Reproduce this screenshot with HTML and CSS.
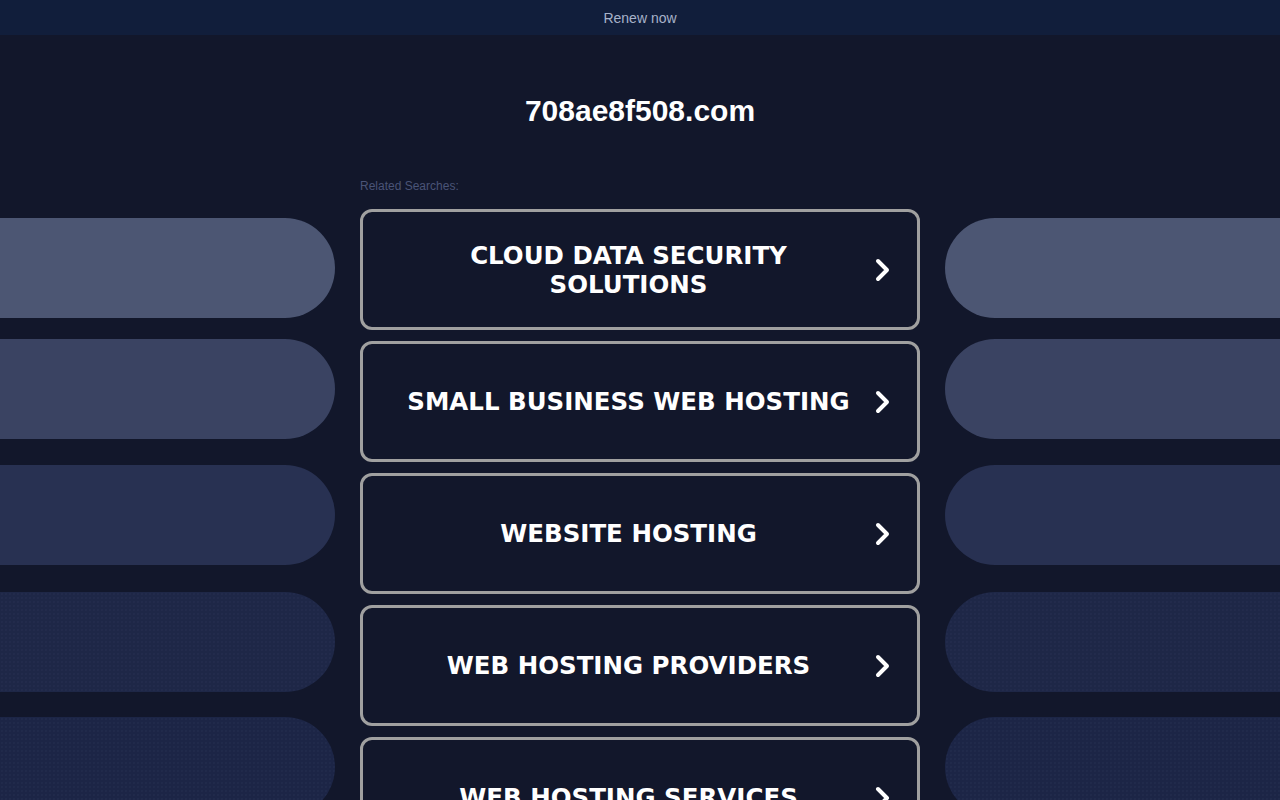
FILE: index.html
```html
<!DOCTYPE html>
<html lang="en">
<head>
<meta charset="utf-8">
<title>708ae8f508.com</title>
<link rel="stylesheet" href="styles.css">
</head>
<body>
<div class="topbar"><a class="renew" href="#">Renew now</a></div>
<h1 class="domain">708ae8f508.com</h1>
<div class="layout">
  <div class="side side-left">
    <div class="pill p1"></div>
    <div class="pill p2"></div>
    <div class="pill p3"></div>
    <div class="pill p4"></div>
    <div class="pill p5"></div>
  </div>
  <div class="center">
    <div class="related">Related Searches:</div>
    <div class="list">
      <a class="item" href="#"><span class="label">CLOUD DATA SECURITY SOLUTIONS</span><span class="chev"><svg width="18" height="28" viewBox="0 0 18 28"><path d="M4 5 L13 14 L4 23" fill="none" stroke="#fff" stroke-width="4" stroke-linecap="round" stroke-linejoin="round"/></svg></span></a>
      <a class="item" href="#"><span class="label">SMALL BUSINESS WEB HOSTING</span><span class="chev"><svg width="18" height="28" viewBox="0 0 18 28"><path d="M4 5 L13 14 L4 23" fill="none" stroke="#fff" stroke-width="4" stroke-linecap="round" stroke-linejoin="round"/></svg></span></a>
      <a class="item" href="#"><span class="label">WEBSITE HOSTING</span><span class="chev"><svg width="18" height="28" viewBox="0 0 18 28"><path d="M4 5 L13 14 L4 23" fill="none" stroke="#fff" stroke-width="4" stroke-linecap="round" stroke-linejoin="round"/></svg></span></a>
      <a class="item" href="#"><span class="label">WEB HOSTING PROVIDERS</span><span class="chev"><svg width="18" height="28" viewBox="0 0 18 28"><path d="M4 5 L13 14 L4 23" fill="none" stroke="#fff" stroke-width="4" stroke-linecap="round" stroke-linejoin="round"/></svg></span></a>
      <a class="item" href="#"><span class="label">WEB HOSTING SERVICES</span><span class="chev"><svg width="18" height="28" viewBox="0 0 18 28"><path d="M4 5 L13 14 L4 23" fill="none" stroke="#fff" stroke-width="4" stroke-linecap="round" stroke-linejoin="round"/></svg></span></a>
    </div>
  </div>
  <div class="side side-right">
    <div class="pill p1"></div>
    <div class="pill p2"></div>
    <div class="pill p3"></div>
    <div class="pill p4"></div>
    <div class="pill p5"></div>
  </div>
</div>
</body>
</html>
```

FILE: styles.css
```css
html, body {
  margin: 0;
  padding: 0;
  height: 100%;
  overflow: hidden;
}
body {
  background: #12172b;
  font-family: "Liberation Sans", Arial, sans-serif;
  color: #fff;
}
.topbar {
  height: 35px;
  background: #111e3b;
  display: flex;
  align-items: center;
  justify-content: center;
}
.renew {
  color: #a7b2c9;
  font-size: 14px;
  text-decoration: none;
  margin-top: 1px;
}
.domain {
  margin: 60px 0 0;
  height: 32px;
  line-height: 32px;
  text-align: center;
  font-size: 30px;
  font-weight: bold;
  color: #fff;
}
.layout {
  display: grid;
  grid-template-columns: 335px 560px 335px;
  column-gap: 25px;
  margin-top: 0;
}
.side {
  display: flex;
  flex-direction: column;
  padding-top: 91px;
}
.pill {
  height: 100px;
  flex: none;
}
.side-left .pill { border-radius: 0 50px 50px 0; }
.side-right .pill { border-radius: 50px 0 0 50px; }
.p1 { background: #4c5673; }
.p2 { background: #3a4362; margin-top: 21px; }
.p3 { background: #283152; margin-top: 26px; }
.p4 {
  background-color: #1e2747;
  background-image: radial-gradient(rgba(58, 70, 105, 0.22) 0.6px, transparent 0.9px);
  background-size: 4px 4px;
  margin-top: 27px;
}
.p5 {
  background-color: #1c2546;
  background-image: radial-gradient(rgba(58, 70, 105, 0.22) 0.6px, transparent 0.9px);
  background-size: 4px 4px;
  margin-top: 25px;
}
.center {
  display: flex;
  flex-direction: column;
}
.related {
  margin-top: 52px;
  font-size: 12px;
  line-height: 14px;
  color: #4a5477;
}
.list {
  margin-top: 16px;
  display: flex;
  flex-direction: column;
  gap: 11px;
}
.item {
  box-sizing: border-box;
  height: 121px;
  border: 3px solid #a0a0a0;
  border-radius: 12px;
  background: #12172b;
  display: flex;
  align-items: center;
  text-decoration: none;
  color: #fff;
  flex: none;
}
.label {
  flex: 1;
  padding-left: 30px;
  text-align: center;
  font-family: "DejaVu Sans", Verdana, sans-serif;
  font-weight: bold;
  font-size: 24.5px;
  line-height: 29px;
}
.chev {
  width: 53px;
  flex: none;
  display: flex;
  align-items: center;
  justify-content: flex-start;
}
.chev svg { display: block; margin-left: 10px; }
```
